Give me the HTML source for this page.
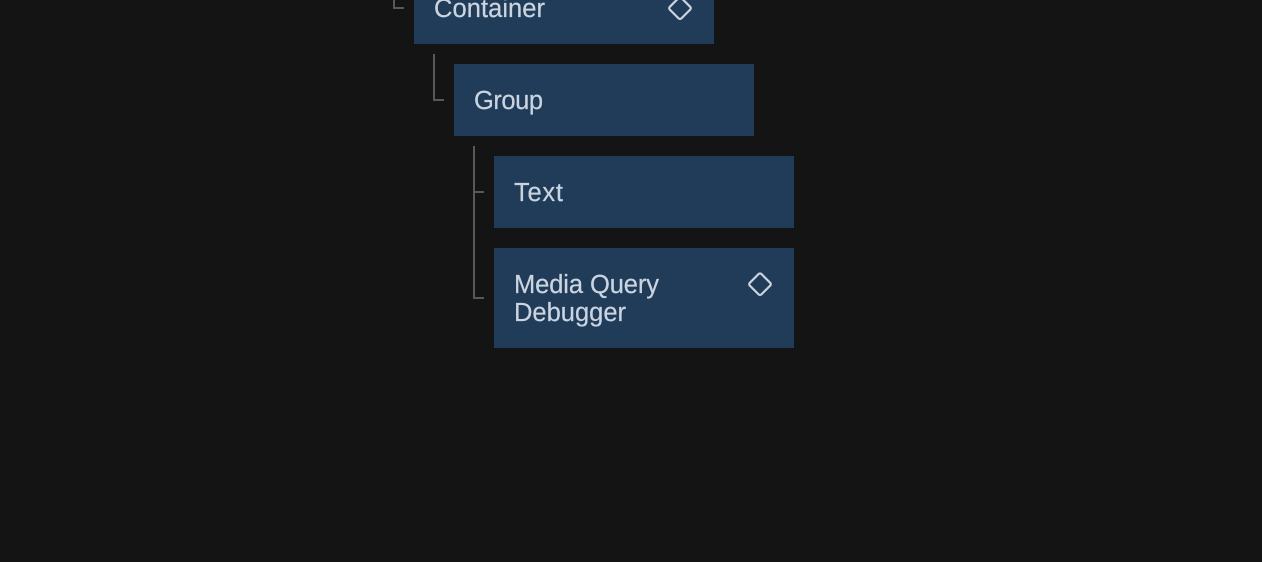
<!DOCTYPE html>
<html><head><meta charset="utf-8"><style>
html,body{margin:0;padding:0;background:#141414;width:1262px;height:562px;overflow:hidden}
svg{display:block}
text{font-family:"Liberation Sans",sans-serif;font-size:25.5px;fill:#cbd5e1;stroke:#cbd5e1;stroke-width:.2}
</style></head><body>
<svg width="1262" height="562" viewBox="0 0 1262 562" xmlns="http://www.w3.org/2000/svg">
<rect width="1262" height="562" fill="#141414"/>
<g fill="#213c59">
<rect x="414" y="-28" width="300" height="72"/>
<rect x="454" y="64" width="300" height="72"/>
<rect x="494" y="156" width="300" height="72"/>
<rect x="494" y="248" width="300" height="100"/>
</g>
<g fill="#585858">
<rect x="393" y="0" width="2" height="9"/><rect x="393" y="7" width="11" height="2"/>
<rect x="433" y="54" width="2" height="47"/><rect x="433" y="99" width="11" height="2"/>
<rect x="473" y="146" width="2" height="153"/><rect x="473" y="191" width="11" height="2"/><rect x="473" y="297" width="11" height="2"/>
</g>
<text x="434" y="17" textLength="111" lengthAdjust="spacing">Container</text>
<text x="474" y="109" textLength="69" lengthAdjust="spacing">Group</text>
<text x="514" y="201" textLength="49" lengthAdjust="spacing">Text</text>
<text x="514" y="293" textLength="145" lengthAdjust="spacing">Media Query</text>
<text x="514" y="321" textLength="112" lengthAdjust="spacing">Debugger</text>
<g fill="none" stroke="#cbd5e1" stroke-width="2.2">
<rect x="-8.2" y="-8.2" width="16.4" height="16.4" rx="2" transform="translate(680 8.2) rotate(45)"/>
<rect x="-8.2" y="-8.2" width="16.4" height="16.4" rx="2" transform="translate(760 284.2) rotate(45)"/>
</g>
</svg>
</body></html>
